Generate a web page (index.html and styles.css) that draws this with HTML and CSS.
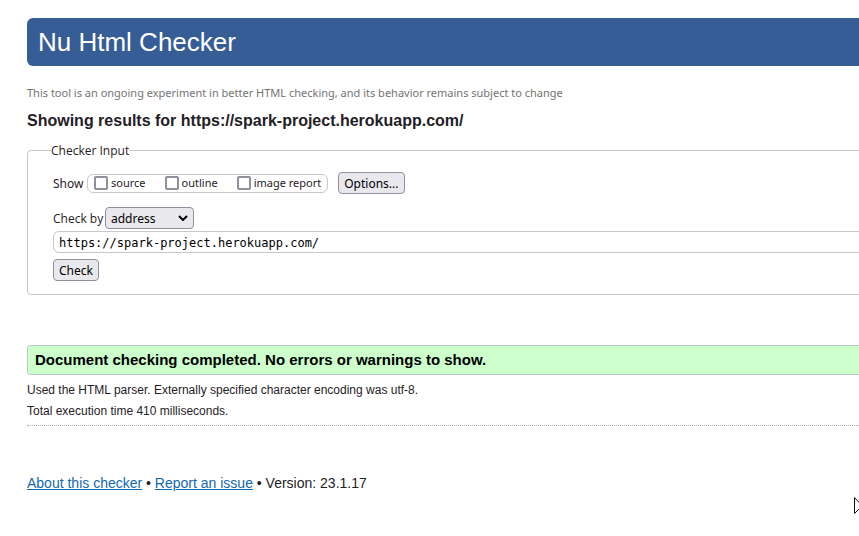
FILE: index.html
```html
<!DOCTYPE html>
<html lang="en">
<head>
<meta charset="utf-8">
<title>Nu Html Checker</title>
<link rel="stylesheet" href="styles.css">
</head>
<body>
<div class="page">
  <h1 class="banner">Nu Html Checker</h1>
  <p class="notice">This tool is an ongoing experiment in better HTML checking, and its behavior remains subject to change</p>
  <h2 class="title">Showing results for https://spark-project.herokuapp.com/</h2>
  <form>
    <fieldset class="checker">
      <legend>Checker Input</legend>
      <div class="row show-row">
        <span class="show-label">Show</span>
        <div class="choices">
          <label><input type="checkbox">source</label>
          <label><input type="checkbox">outline</label>
          <label><input type="checkbox">image report</label>
        </div>
        <button class="button options" type="button">Options...</button>
      </div>
      <div class="row">
        <label class="check-label" for="method">Check by</label>
        <span class="select">
          <select id="method"><option>address</option><option>file upload</option><option>text input</option></select>
          <svg viewBox="0 0 10 6" aria-hidden="true"><path d="M1 1l4 4 4-4"/></svg>
        </span>
      </div>
      <input class="address" type="text" aria-label="Address" value="https://spark-project.herokuapp.com/">
      <button class="button" type="button">Check</button>
    </fieldset>
  </form>
  <p class="success">Document checking completed. No errors or warnings to show.</p>
  <div class="details">
    <p>Used the HTML parser. Externally specified character encoding was utf-8.</p>
    <p>Total execution time 410 milliseconds.</p>
  </div>
  <footer><a href="#about">About this checker</a> • <a href="#issue">Report an issue</a> • Version: 23.1.17</footer>
</div>
<svg class="pointer" viewBox="0 0 12 18" aria-hidden="true"><path d="M.5 .5v16l4-4h7z"/></svg>
</body>
</html>
```
FILE: styles.css
```css
* { box-sizing: border-box; }
body {
  position: relative;
  min-height: 100vh;
  margin: 0;
  padding: 18px 0 0 27px;
  overflow: hidden;
  background: #fff;
  color: #1f2126;
  font-family: "Noto Sans", sans-serif;
  font-size: 12px;
  line-height: 16px;
}
.page { margin-right: -40px; }
h1, h2, p { margin: 0; }
.banner {
  padding: 8px 11px;
  border-radius: 6px;
  background: #365d95;
  color: #fff;
  font: 26px/32px "Liberation Sans", sans-serif;
}
.notice {
  margin-top: 19px;
  color: #737373;
  font-size: 11px;
}
.title {
  margin-top: 10px;
  font: bold 16px/20px "Liberation Sans", sans-serif;
}
.checker {
  margin: 12px 0 0;
  padding: 14px 25px 13px;
  border: 1px solid #c8c8c8;
  border-radius: 4px;
}
legend {
  margin-left: -2px;
  padding: 0;
  font: 12px/15px "Open Sans", sans-serif;
}
.row { display: flex; align-items: center; height: 22px; }
.show-row { margin-bottom: 13px; }
.show-label { width: 34px; }
.choices {
  display: flex;
  gap: 19px;
  height: 19px;
  padding: 0 6px;
  border: 1px solid #c8c8c8;
  border-radius: 6px;
  font-size: 11px;
}
.choices label { display: flex; align-items: center; gap: 3px; }
.choices input {
  appearance: none;
  width: 14px;
  height: 14px;
  margin: 0;
  border: 2px solid #8f8f9d;
  border-radius: 2px;
  background: #fff;
}
.button, select {
  height: 22px;
  padding: 1px 5px 0;
  border: 1px solid #8f8f9d;
  border-radius: 4px;
  background: #e9e9ed;
  color: #000;
  font: 12px/18px "Noto Sans", sans-serif;
}
.options { margin-left: 10px; }
.check-label { width: 52px; font-family: "Open Sans", sans-serif; }
.show-label, .check-label { padding-top: 2px; }
.select { position: relative; }
select { display: block; width: 89px; appearance: none; }
.select svg {
  position: absolute;
  top: 8px;
  right: 6px;
  width: 10px;
  height: 6px;
  fill: none;
  stroke: #000;
  stroke-width: 2;
}
.address {
  display: block;
  width: 100%;
  height: 22px;
  margin: 2px 0 6px;
  padding: 2px 5px 0;
  border: 1px solid #c8c8c8;
  border-radius: 6px;
  color: #000;
  font: 12px "DejaVu Sans Mono", monospace;
}
.success {
  margin-top: 50px;
  padding: 4px 7px;
  border: 1px solid #bfcabf;
  border-radius: 3px;
  background: #cfc;
  color: #000;
  font: bold 15px/20px "Liberation Sans", sans-serif;
}
.details {
  padding: 5px 0 3px;
  border-bottom: 1px dotted #aaa;
  font: 12px/21px "Liberation Sans", sans-serif;
}
footer { margin-top: 47px; font: 14px/20px "Liberation Sans", sans-serif; }
a { color: #1068b0; }
.pointer {
  position: absolute;
  top: 497px;
  right: -7px;
  width: 12px;
  height: 18px;
  fill: #fff;
  stroke: #111;
}
```
